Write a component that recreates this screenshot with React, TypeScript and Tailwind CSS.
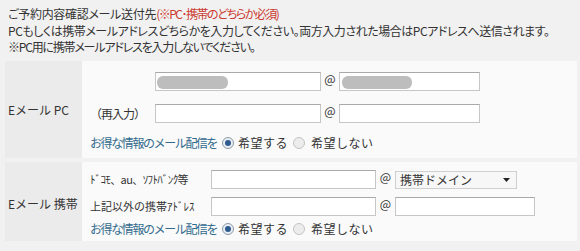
import React from "react";

const font = "font-['Noto_Sans_CJK_JP','Noto_Sans',sans-serif]";

function TextInput({ w, filled, pill }: { w: string; filled?: boolean; pill?: string }) {
  return (
    <div className={`${w} shrink-0 h-[19px] bg-white border border-[#c6c6c6] border-t-[#a9a9a9] relative`}>
      {filled ? <div className={`absolute top-[3px] left-[1px] h-[13px] ${pill} rounded-[6px] bg-[#bdbdbd]`} /> : null}
    </div>
  );
}

function At({ w }: { w: string }) {
  return <div className={`${w} shrink-0 text-center text-[12px] leading-[14px] self-start text-[#333]`}>@</div>;
}

function Radio({ checked }: { checked?: boolean }) {
  return checked ? (
    <span className="shrink-0 w-[12px] h-[12px] rounded-full border border-[#8c9aa8] bg-[#e9eef3] flex items-center justify-center">
      <span className="w-[6px] h-[6px] rounded-full bg-[#2d5b8e]" />
    </span>
  ) : (
    <span className="shrink-0 w-[12px] h-[12px] rounded-full border border-[#c4c4c4] bg-[#ececec]" />
  );
}

function RadioRow() {
  return (
    <div className="flex items-center h-[16px] text-[12px] whitespace-nowrap">
      <span className="shrink-0 text-[#336b8c] w-[132px] tracking-[-1.4px]">お得な情報のメール配信を</span>
      <Radio checked />
      <span className="shrink-0 ml-[4px] w-[55px] text-[#333] tracking-[0.5px]">希望する</span>
      <Radio />
      <span className="ml-[6px] text-[#333] tracking-[0.5px]">希望しない</span>
    </div>
  );
}

export default function App() {
  return (
    <div className={`w-[580px] h-[251px] bg-[#f1f1f1] ${font} text-[#333] overflow-hidden`}>
      <div className="pt-[6px] pl-[8px] text-[12px] leading-[16.5px] [font-feature-settings:'palt'] h-[55px] whitespace-nowrap">
        <div className="tracking-[-0.3px]">
          ご予約内容確認メール送付先<span className="text-[#cc3a30] tracking-[-1.5px]">(※PC･携帯のどちらか必須)</span>
        </div>
        <div className="tracking-[-0.45px]">
          PCもしくは携帯メールアドレスどちらかを入力してください。両方入力された場合はPCアドレスへ送信されます。
        </div>
        <div className="tracking-[-1.2px]">※PC用に携帯メールアドレスを入力しないでください。</div>
      </div>
      <div className="ml-[5px] w-[572px] flex flex-col gap-[4px] mt-[6px]">
        <div className="flex h-[97px]">
          <div className="w-[77px] bg-[#ebebeb] flex items-center pl-[3px] text-[12px]">Eメール PC</div>
          <div className="flex-1 bg-[#fafafa] pl-[8px] pt-[11px] flex flex-col">
            <div className="flex items-center">
              <div className="w-[65px] shrink-0" />
              <TextInput w="w-[166px]" filled pill="w-[71px]" />
              <At w="w-[18px]" />
              <TextInput w="w-[141px]" filled pill="w-[70px] left-[2px]" />
            </div>
            <div className="flex items-center mt-[13px]">
              <div className="w-[65px] shrink-0 text-[12px] tracking-[-1px] whitespace-nowrap">（再入力）</div>
              <TextInput w="w-[166px]" />
              <At w="w-[18px]" />
              <TextInput w="w-[141px]" />
            </div>
            <div className="mt-[12px]">
              <RadioRow />
            </div>
          </div>
        </div>
        <div className="flex h-[79px]">
          <div className="w-[77px] bg-[#ebebeb] flex items-center pl-[3px] pt-[4px] text-[12px]">Eメール 携帯</div>
          <div className="flex-1 bg-[#fafafa] pl-[8px] pt-[8px] flex flex-col">
            <div className="flex items-center">
              <div className="w-[121px] shrink-0 text-[11px] tracking-[-0.6px] whitespace-nowrap">ﾄﾞｺﾓ、au、ｿﾌﾄﾊﾞﾝｸ等</div>
              <TextInput w="w-[165px]" />
              <At w="w-[19px]" />
              <div className="w-[122px] shrink-0 h-[18px] bg-[#f7f7f7] border border-[#cfcfcf] flex items-center pl-[4px] pr-[6px] text-[12px]">
                <span className="flex-1">携帯ドメイン</span>
                <svg width="7" height="4" viewBox="0 0 7 4"><path d="M0 0h7L3.5 4z" fill="#222" /></svg>
              </div>
            </div>
            <div className="flex items-center mt-[8px]">
              <div className="w-[121px] shrink-0 text-[11px] whitespace-nowrap">上記以外の携帯ｱﾄﾞﾚｽ</div>
              <TextInput w="w-[165px]" />
              <At w="w-[19px]" />
              <TextInput w="w-[140px]" />
            </div>
            <div className="mt-[5px]">
              <RadioRow />
            </div>
          </div>
        </div>
      </div>
    </div>
  );
}
